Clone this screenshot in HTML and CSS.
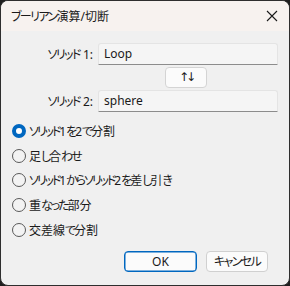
FILE: index.html
```html
<!DOCTYPE html>
<html lang="ja">
<head>
<meta charset="utf-8">
<link rel="stylesheet" href="styles.css">
</head>
<body>
<div class="window">
  <div class="titlebar">
    <span class="title"><span class="k">ブーリアン</span>演算/切断</span>
    <svg class="close" width="12" height="12" viewBox="0 0 12 12"><path d="M1 1 L11 11 M11 1 L1 11" stroke="#1a1a1a" stroke-width="1.1"/></svg>
  </div>
  <div class="content">
    <div class="field">
      <span class="label"><span class="k">ソリッド</span> 1:</span>
      <div class="input">Loop</div>
    </div>
    <div class="swaprow"><div class="swap">↑↓</div></div>
    <div class="field">
      <span class="label"><span class="k">ソリッド</span> 2:</span>
      <div class="input">sphere</div>
    </div>
    <div class="radios">
      <div class="radio"><span class="dot checked"></span><span><span class="k">ソリッド</span>1<span class="k">を</span>2<span class="k">で</span>分割</span></div>
      <div class="radio"><span class="dot"></span><span>足<span class="k">し</span>合<span class="k">わせ</span></span></div>
      <div class="radio"><span class="dot"></span><span><span class="k">ソリッド</span>1<span class="k">からソリッド</span>2<span class="k">を</span>差<span class="k">し</span>引<span class="k">き</span></span></div>
      <div class="radio"><span class="dot"></span><span>重<span class="k">なった</span>部分</span></div>
      <div class="radio"><span class="dot"></span><span>交差線<span class="k">で</span>分割</span></div>
    </div>
    <div class="buttons">
      <div class="btn primary">OK</div>
      <div class="btn"><span class="k">キャンセル</span></div>
    </div>
  </div>
</div>
</body>
</html>
```
FILE: styles.css
```css
html, body {
  margin: 0;
  padding: 0;
  background: #1f1f1f;
}
body {
  width: 290px;
  height: 286px;
  font-family: "Noto Sans", "Noto Sans CJK JP", sans-serif;
  font-size: 12px;
  color: #1a1a1a;
  font-feature-settings: "palt" 1;
}
.k {
  letter-spacing: -1.6px;
}
.window {
  box-sizing: border-box;
  width: 290px;
  height: 286px;
  border: 1px solid #2e2e2e;
  border-radius: 8px;
  overflow: hidden;
  background: #f0f0f0;
  display: flex;
  flex-direction: column;
}
.titlebar {
  height: 30px;
  flex: none;
  background: #f7f2ef;
  display: flex;
  align-items: center;
  justify-content: space-between;
  padding: 0 11px 0 10px;
}
.title {
  font-size: 12px;
}
.close { display: block; }
.content {
  flex: 1;
  display: flex;
  flex-direction: column;
  padding: 12px 11px 0 11px;
}
.field {
  display: flex;
  align-items: center;
  height: 22px;
}
.label {
  width: 81px;
  text-align: right;
  padding-right: 5px;
  font-size: 12px;
}
.input {
  box-sizing: border-box;
  width: 180px;
  height: 22px;
  background: #f5f5f5;
  border: 1px solid #e4e4e4;
  border-bottom: 1px solid #8c8c8c;
  border-radius: 3px 3px 0 0;
  padding: 0 5px;
  line-height: 19px;
  font-size: 12px;
}
.swaprow {
  display: flex;
  padding: 2px 0 2px 153px;
}
.swap {
  box-sizing: border-box;
  width: 42px;
  height: 21px;
  background: #fbfbfb;
  border: 1px solid #d4d4d4;
  border-radius: 4px;
  text-align: center;
  line-height: 19px;
  font-size: 12px;
  font-family: "DejaVu Sans", sans-serif;
  letter-spacing: -3px;
}
.radios {
  margin-top: 7px;
  display: flex;
  flex-direction: column;
}
.radio {
  display: flex;
  align-items: center;
  height: 24.6px;
}
.radio .k {
  letter-spacing: -2.1px;
}
.dot {
  box-sizing: border-box;
  width: 14px;
  height: 14px;
  border-radius: 50%;
  border: 1px solid #595959;
  background: #f3f3f3;
  margin-right: 3px;
  flex: none;
}
.dot.checked {
  border: 4px solid #0067c0;
  background: #ffffff;
}
.buttons {
  display: flex;
  justify-content: flex-end;
  gap: 9px;
  margin-top: auto;
  margin-bottom: 13px;
  padding-right: 10px;
}
.btn {
  box-sizing: border-box;
  width: 62px;
  height: 21px;
  border: 1px solid #d0d0d0;
  border-radius: 4px;
  background: #fbfbfb;
  text-align: center;
  line-height: 19px;
  font-size: 12px;
}
.btn.primary {
  width: 73px;
  border: 1px solid #0067c0;
  box-shadow: inset 0 0 0 0.5px #0067c0;
}
```
